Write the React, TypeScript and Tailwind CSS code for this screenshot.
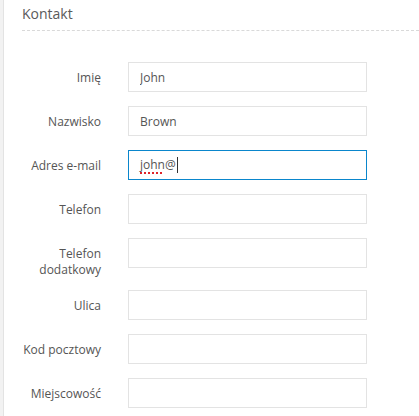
const FIELDS: { label: string; value?: string }[] = [
  { label: 'Imię', value: 'John' },
  { label: 'Nazwisko', value: 'Brown' },
  { label: 'Adres e-mail' },
  { label: 'Telefon' },
  { label: 'Telefon dodatkowy' },
  { label: 'Ulica' },
  { label: 'Kod pocztowy' },
  { label: 'Miejscowość' },
];

export default function App() {
  return (
    <div
      className="flex h-[416px] w-[419px] overflow-hidden bg-white text-[#555]"
      style={{ fontFamily: '"Open Sans", sans-serif' }}
    >
      {/* left rail */}
      <div className="w-[3px] shrink-0 bg-[#f2f2f2]" />
      <div className="w-px shrink-0 bg-[#e3e3e3]" />

      <div className="flex-1 pl-[18px]">
        {/* Section header */}
        <div className="flex h-[31px] items-center border-b border-dashed border-[#d9d9d9] pb-[3px] text-[14px] text-[#5a5a5a]">
          Kontakt
        </div>

        {/* Form */}
        <div className="mt-[31px] flex flex-col gap-[14px]">
          {FIELDS.map(({ label, value }, i) => (
            <div key={label} className="flex items-start">
              <label
                className={`w-[79px] shrink-0 pt-[8px] text-right text-[12px] leading-[16px] text-[#555] ${
                  label === 'Telefon dodatkowy' ? '-mb-[2px]' : ''
                }`}
              >
                {label === 'Telefon dodatkowy' ? (
                  <>
                    Telefon
                    <br />
                    dodatkowy
                  </>
                ) : (
                  label
                )}
              </label>
              <div className="ml-[27px] w-[239px]">
                {i === 2 ? (
                  <div className="flex h-[30px] items-center border border-[#0a86cc] px-[11px] text-[12px] text-[#555]">
                    <span className="underline decoration-[#e0242a] decoration-dotted decoration-2 underline-offset-[3px]">
                      john
                    </span>
                    <span>@</span>
                    <span className="ml-px h-[16px] w-px bg-[#333]" />
                  </div>
                ) : (
                  <input
                    readOnly
                    value={value ?? ''}
                    className="block h-[30px] w-full border border-[#e3e3e3] px-[11px] text-[12px] text-[#555] outline-none"
                  />
                )}
              </div>
            </div>
          ))}
        </div>
      </div>
    </div>
  );
}
